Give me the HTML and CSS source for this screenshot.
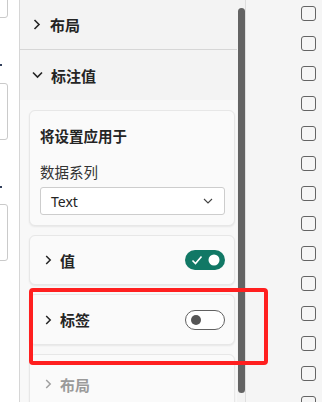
FILE: index.html
```html
<!DOCTYPE html>
<html lang="zh-CN">
<head>
  <meta charset="UTF-8">
  <title>格式设置</title>
  <link rel="stylesheet" href="styles.css">
</head>
<body>

  <div class="side-left">
    <div class="field field-top"></div>
    <span class="dot dot-one"></span>
    <div class="field"></div>
    <span class="dot dot-two"></span>
    <div class="field"></div>
  </div>

  <div class="panel">
    <div class="panel-content">
      <div class="section-head first">
        <svg class="chev-right" width="8" height="11" viewBox="0 0 8 11"><path d="M1.5 1 L6 5.5 L1.5 10" fill="none" stroke="#242424" stroke-width="1.6"/></svg>
        <span>布局</span>
      </div>
      <div class="section-head">
        <svg class="chev-down" width="11" height="8" viewBox="0 0 11 8"><path d="M1 1.5 L5.5 6 L10 1.5" fill="none" stroke="#242424" stroke-width="1.6"/></svg>
        <span>标注值</span>
      </div>

      <div class="section-body">
        <div class="card card-apply">
          <div class="apply-title">将设置应用于</div>
          <div class="apply-label">数据系列</div>
          <div class="dropdown">
            <span>Text</span>
            <svg width="10" height="6" viewBox="0 0 10 6"><path d="M1 1 L5 5 L9 1" fill="none" stroke="#424242" stroke-width="1.1"/></svg>
          </div>
        </div>

        <div class="card card-row">
          <svg class="chev-small" width="7" height="10" viewBox="0 0 7 10"><path d="M1.2 1 L5.2 5 L1.2 9" fill="none" stroke="#242424" stroke-width="1.5"/></svg>
          <span class="row-title">值</span>
          <div class="toggle on">
            <svg width="40" height="20" viewBox="0 0 40 20"><path d="M7.5 10.5 L10.5 13.5 L16.5 6.5" fill="none" stroke="#fff" stroke-width="1.6"/><circle cx="29" cy="10" r="5.5" fill="#fff"/></svg>
          </div>
        </div>

        <div class="card card-row">
          <svg class="chev-small" width="7" height="10" viewBox="0 0 7 10"><path d="M1.2 1 L5.2 5 L1.2 9" fill="none" stroke="#242424" stroke-width="1.5"/></svg>
          <span class="row-title">标签</span>
          <div class="toggle off">
            <svg width="38" height="18" viewBox="0 0 38 18"><circle cx="10" cy="9" r="5" fill="#555"/></svg>
          </div>
        </div>

        <div class="card card-row muted">
          <svg class="chev-small" width="7" height="10" viewBox="0 0 7 10"><path d="M1.2 1 L5.2 5 L1.2 9" fill="none" stroke="#a0a0a0" stroke-width="1.5"/></svg>
          <span class="row-title">布局</span>
        </div>
      </div>
    </div>
    <div class="scroll">
      <div class="thumb"></div>
    </div>
  </div>

  <div class="side-right">
    <div class="check"></div>
    <div class="check"></div>
    <div class="check"></div>
    <div class="check"></div>
    <div class="check"></div>
    <div class="check"></div>
    <div class="check"></div>
    <div class="check"></div>
    <div class="check"></div>
    <div class="check"></div>
    <div class="check"></div>
    <div class="check"></div>
    <div class="check"></div>
    <div class="check"></div>
  </div>

  <div class="highlight"></div>

</body>
</html>
```

FILE: styles.css
```css
body {
  margin: 0;
  width: 322px;
  height: 402px;
  overflow: hidden;
  display: flex;
  position: relative;
  font-family: "Noto Sans", "Noto Sans CJK SC", sans-serif;
  color: #242424;
  background: #f5f5f5;
}
.side-left {
  width: 19px;
  border-right: 1px solid #d6d6d6;
  background: #fff;
  display: flex;
  flex-direction: column;
  flex-shrink: 0;
}
.field {
  width: 20px;
  height: 57px;
  margin-left: -12px;
  box-sizing: border-box;
  border: 1px solid #cacaca;
  border-radius: 3px;
  background: #fff;
  flex-shrink: 0;
}
.field-top {
  height: 40px;
  margin-top: -22px;
}
.dot {
  width: 2px;
  height: 2px;
  background: #33415c;
  flex-shrink: 0;
}
.dot-one {
  margin: 46px 0 17px;
}
.dot-two {
  margin: 46px 0 16px;
}
.panel {
  width: 225px;
  border-right: 1px solid #dedede;
  display: flex;
  background: #f3f3f3;
  flex-shrink: 0;
}
.panel-content {
  width: 217px;
  display: flex;
  flex-direction: column;
}
.section-head {
  height: 50px;
  display: flex;
  align-items: center;
  font-size: 15px;
  font-weight: 700;
  flex-shrink: 0;
}
.section-head.first {
  height: 49px;
  border-bottom: 1px solid #d6d6d6;
}
.chev-right {
  margin: 0 9px 0 13px;
}
.chev-down {
  margin: 0 8px 0 12px;
}
.section-body {
  flex: 1;
  background: #f8f8f8;
  padding: 10px 2px 0 9px;
  display: flex;
  flex-direction: column;
  gap: 9px;
}
.card {
  background: #fafafa;
  border: 1px solid #e7e7e7;
  border-radius: 6px;
  box-shadow: 0 1px 2px rgba(0, 0, 0, 0.07);
  flex-shrink: 0;
}
.card-apply {
  height: 116px;
  box-sizing: border-box;
  padding: 15px 9px 0 10px;
  font-size: 14.5px;
}
.apply-title {
  font-weight: 700;
  line-height: 20px;
}
.apply-label {
  line-height: 20px;
  margin-top: 16px;
  color: #333;
}
.dropdown {
  margin-top: 5px;
  height: 28px;
  box-sizing: border-box;
  border: 1px solid #cdcdcd;
  border-radius: 3px;
  background: #fff;
  display: flex;
  align-items: center;
  justify-content: space-between;
  padding: 0 11px 0 10px;
  font-size: 14px;
  color: #242424;
}
.card-row {
  height: 50px;
  box-sizing: border-box;
  display: flex;
  align-items: center;
  padding: 0 9px 0 15px;
}
.card-row + .card-row {
  height: 51px;
}
.card-row.muted {
  height: 60px;
  color: #9a9a9a;
}
.chev-small {
  margin-right: 8px;
}
.row-title {
  font-size: 15px;
  font-weight: 700;
  flex: 1;
}
.toggle {
  width: 40px;
  height: 20px;
  border-radius: 10px;
  box-sizing: border-box;
  display: flex;
}
.toggle.on {
  background: #117865;
}
.toggle.off {
  background: #fff;
  border: 1px solid #616161;
}
.scroll {
  width: 8px;
}
.thumb {
  width: 7px;
  height: 385px;
  margin: 8px 0 0 1px;
  border-radius: 4px;
  background: #636363;
}
.side-right {
  flex: 1;
  display: flex;
  flex-direction: column;
  gap: 15px;
  padding: 6px 0 0 55px;
}
.check {
  width: 15px;
  height: 15px;
  box-sizing: border-box;
  border: 1px solid #646464;
  border-radius: 3px;
  flex-shrink: 0;
}
.highlight {
  position: absolute;
  left: 29px;
  top: 288px;
  width: 239px;
  height: 77px;
  box-sizing: border-box;
  border: 4px solid #ff1f1f;
  border-radius: 4px;
}
```
